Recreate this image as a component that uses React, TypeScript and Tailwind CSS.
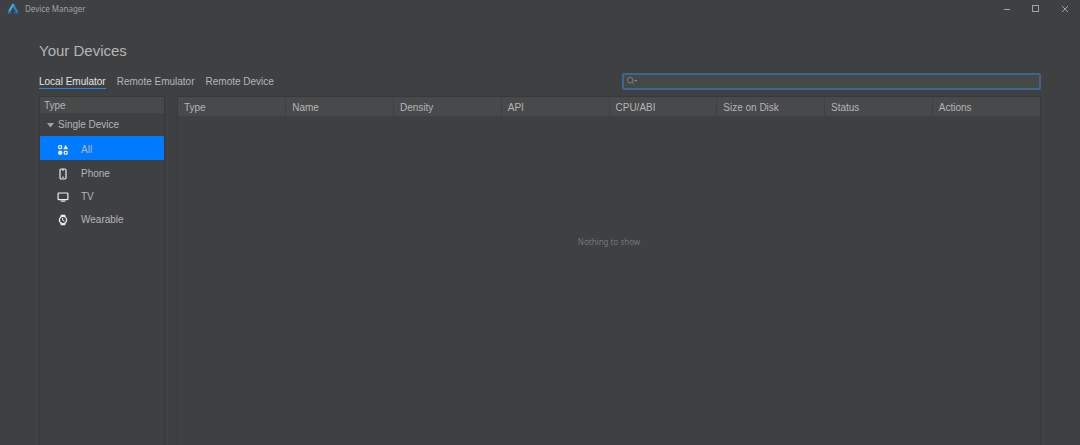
import React, { useState } from 'react';
import clsx from 'clsx';

const tabs = ['Local Emulator', 'Remote Emulator', 'Remote Device'];

const columns = ['Type', 'Name', 'Density', 'API', 'CPU/ABI', 'Size on Disk', 'Status', 'Actions'];

const AllIcon = () => (
  <svg viewBox="0 0 12 12" className="h-3 w-3" fill="none" stroke="currentColor" strokeWidth="1.3">
    <rect x="1.7" y="1.7" width="2.9" height="2.9" rx="0.8" />
    <path d="M8.7 0.8 L11.2 5.2 H6.2 Z" fill="currentColor" stroke="none" />
    <circle cx="3.2" cy="8.7" r="2.2" fill="currentColor" stroke="none" />
    <rect x="7.3" y="7.3" width="2.9" height="2.9" rx="0.8" />
  </svg>
);

const PhoneIcon = () => (
  <svg viewBox="0 0 12 12" className="h-3 w-3" fill="none" stroke="currentColor">
    <rect x="3" y="1" width="6" height="10" rx="1.2" strokeWidth="1.2" />
    <path d="M5 1.8 H7" strokeWidth="1.2" />
    <path d="M5 9.2 H7" strokeWidth="0.9" />
  </svg>
);

const TvIcon = () => (
  <svg viewBox="0 0 12 12" className="h-3 w-3" fill="none" stroke="currentColor" strokeWidth="1.2">
    <rect x="1.1" y="2" width="9.8" height="6.7" rx="0.8" />
    <path d="M3.7 10.1 H8.3" />
  </svg>
);

const WatchIcon = () => (
  <svg viewBox="0 0 12 12" className="h-3 w-3" fill="none" stroke="currentColor" strokeWidth="1.3">
    <circle cx="6" cy="6" r="3.6" />
    <path d="M3.8 0.8 H8.2 L8.6 2.9 H3.4 Z M3.8 11.2 H8.2 L8.6 9.1 H3.4 Z" fill="currentColor" stroke="none" />
    <path d="M5.6 4 V6.2 L7.6 7.2" strokeWidth="1" />
  </svg>
);

const deviceTypes = [
  { label: 'All', icon: AllIcon },
  { label: 'Phone', icon: PhoneIcon },
  { label: 'TV', icon: TvIcon },
  { label: 'Wearable', icon: WatchIcon }
];

const Logo = () => (
  <svg viewBox="0 0 12 12" className="h-3 w-3">
    <path d="M5.2 1.1 Q6 0.3 6.8 1.1 L8.4 3.9 L6.6 4.6 L5.7 3.7 L3 9.2 L1.6 10.4 Q0.4 9.8 1 8.6 Z" fill="#4bb9e6" />
    <path d="M6.8 1.1 L11 8.6 Q11.7 10.2 10.2 10.5 L8.4 10.3 L8.7 8.6 L5.7 3.7 Z" fill="#2489cf" />
    <path d="M1 8.8 L3 7.4 L4.6 10.5 H1.8 Q0.7 10.2 1 8.8 Z" fill="#2465c7" />
    <path d="M7 8.8 H9 L10.2 10.5 H7 Z" fill="#2859b8" />
  </svg>
);

const TitleBar = () => (
  <header className="flex h-[18px] items-center justify-between pl-[7px] pr-[9px] text-[#a1a3a5]">
    <div className="flex items-center gap-1.5">
      <Logo />
      <span className="font-['Noto_Sans',sans-serif] text-[8px] leading-3">Device Manager</span>
    </div>
    <div className="flex gap-[17px]">
      <button aria-label="Minimize" className="h-3 w-3">
        <svg viewBox="0 0 12 12" className="h-3 w-3" stroke="currentColor">
          <path d="M3 6.5 H9" />
        </svg>
      </button>
      <button aria-label="Maximize" className="h-3 w-3">
        <svg viewBox="0 0 12 12" className="h-3 w-3" fill="none" stroke="currentColor">
          <rect x="2.5" y="2.5" width="6" height="6" />
        </svg>
      </button>
      <button aria-label="Close" className="h-3 w-3">
        <svg viewBox="0 0 12 12" className="h-3 w-3" stroke="currentColor">
          <path d="M3 3 L9 9 M9 3 L3 9" />
        </svg>
      </button>
    </div>
  </header>
);

const App = () => {
  const [tab, setTab] = useState('Local Emulator');
  const [type, setType] = useState('All');
  const [query, setQuery] = useState('');

  return (
    <div className="flex min-h-screen flex-col bg-[#3e4042] font-['Liberation_Sans',Arial,sans-serif] text-[10px] leading-3 text-[#b4b6b8]">
      <TitleBar />

      <main className="flex flex-1 flex-col px-[39px]">
        <h1 className="mt-[23px] text-[15px] leading-5">Your Devices</h1>

        <div className="mt-[11px] flex h-[18px] items-center justify-between">
          <div className="flex gap-[11px] pt-[3px]">
            {tabs.map((name) => (
              <button
                key={name}
                onClick={() => setTab(name)}
                className={clsx(
                  'border-b leading-3',
                  tab === name ? 'border-[#1f8af0] text-[#e4e6e8]' : 'border-transparent'
                )}
              >
                {name}
              </button>
            ))}
          </div>

          <label className="flex h-[17px] w-[419px] items-center rounded-xs border-2 border-[#3d6590] bg-[#454849] pl-0.5 text-[#83868a]">
            <svg viewBox="0 0 12 10" className="h-2.5 w-3" fill="none" stroke="currentColor">
              <circle cx="4.2" cy="4.2" r="2.8" strokeWidth="0.9" />
              <path d="M6.2 6.3 L8 8.3" strokeWidth="0.9" />
              <path d="M8 4 H11.4 L9.7 6 Z" fill="currentColor" stroke="none" />
            </svg>
            <input
              type="text"
              aria-label="Search devices"
              value={query}
              onChange={(e) => setQuery(e.target.value)}
              className="min-w-0 flex-1 bg-transparent px-1 text-[#b4b6b8] outline-none"
            />
          </label>
        </div>

        <div className="mt-1.5 flex flex-1 gap-3">
          {/* Device types */}
          <nav className="w-[126px] border border-b-0 border-[#36383a]">
            <div className="h-4 bg-[#47494b] pl-1 leading-[18px]">Type</div>
            <button className="flex h-[23px] w-full items-center gap-1 pl-[7px] pt-px">
              <svg viewBox="0 0 7 5" className="h-[5px] w-[7px]" fill="#a1a3a5">
                <path d="M0 0 H7 L3.5 4.6 Z" />
              </svg>
              Single Device
            </button>
            {deviceTypes.map((item) => (
              <button
                key={item.label}
                onClick={() => setType(item.label)}
                className={clsx(
                  'flex w-full items-center gap-3 pl-[17px] pt-1',
                  type === item.label ? 'h-6 bg-[#007aff]' : 'h-[23px]'
                )}
              >
                <span className="text-[#eceeef]">
                  <item.icon />
                </span>
                {item.label}
              </button>
            ))}
          </nav>

          {/* Device list */}
          <section className="flex-1 border border-b-0 border-[#36383a]">
            <table className="w-full table-fixed border-collapse">
              <thead>
                <tr className="h-[19px] bg-[#47494b]">
                  {columns.map((name) => (
                    <th
                      key={name}
                      className="border-r border-[#3e4042] pt-0.5 pl-1.5 text-left font-normal last:border-r-0"
                    >
                      {name}
                    </th>
                  ))}
                </tr>
              </thead>
              <tbody>
                <tr>
                  <td
                    colSpan={columns.length}
                    className="pt-[120px] text-center font-['Noto_Sans',sans-serif] text-[8px] leading-3 text-[#747678]"
                  >
                    Nothing to show
                  </td>
                </tr>
              </tbody>
            </table>
          </section>
        </div>
      </main>
    </div>
  );
};

export default App;
